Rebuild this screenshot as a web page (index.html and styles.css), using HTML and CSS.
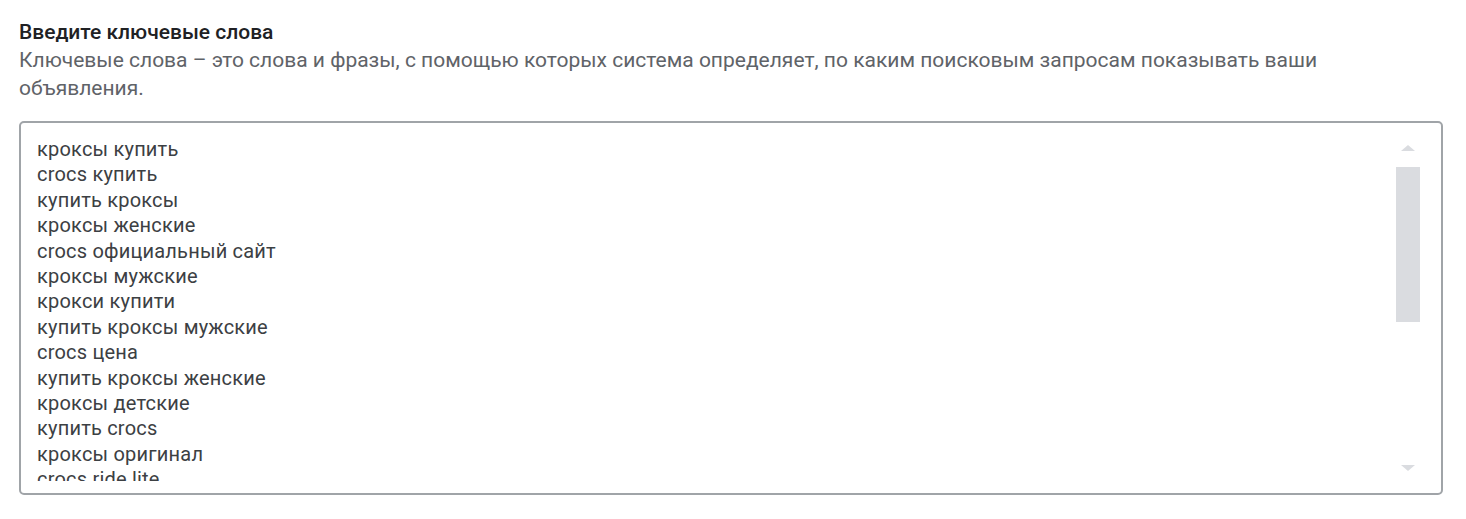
FILE: index.html
```html
<!DOCTYPE html>
<html lang="ru">
<head>
<meta charset="utf-8">
<link rel="stylesheet" href="styles.css">
</head>
<body>
<div class="page">
  <div class="title">Введите ключевые слова</div>
  <div class="desc">Ключевые слова – это слова и фразы, с помощью которых система определяет, по каким поисковым запросам показывать ваши объявления.</div>
  <div class="box">
    <div class="list">
      <div>кроксы купить</div>
      <div>crocs купить</div>
      <div>купить кроксы</div>
      <div>кроксы женские</div>
      <div>crocs официальный сайт</div>
      <div>кроксы мужские</div>
      <div>крокси купити</div>
      <div>купить кроксы мужские</div>
      <div>crocs цена</div>
      <div>купить кроксы женские</div>
      <div>кроксы детские</div>
      <div>купить crocs</div>
      <div>кроксы оригинал</div>
      <div>crocs ride lite</div>
    </div>
    <div class="scroll">
      <div class="arrow up"></div>
      <div class="track"><div class="thumb"></div></div>
      <div class="arrow down"></div>
    </div>
  </div>
</div>
</body>
</html>
```
FILE: styles.css
```css
html, body {
  margin: 0;
  background: #ffffff;
}
.page {
  padding: 18px 23px 0 19px;
  font-family: Roboto, "Noto Sans", sans-serif;
}
.title {
  color: #202124;
  font-size: 21px;
  font-weight: 500;
  line-height: 28px;
}
.desc {
  color: #5f6368;
  font-size: 21px;
  line-height: 28px;
  max-width: 1340px;
}
.box {
  margin-top: 19px;
  height: 374px;
  box-sizing: border-box;
  border: 2px solid #a0a4a8;
  border-radius: 5px;
  display: flex;
}
.list {
  flex: 1;
  margin: 14px 0 12px 16px;
  overflow: hidden;
  color: #3c4043;
  font-size: 20px;
  letter-spacing: 0.2px;
  line-height: 25.4px;
}
.scroll {
  width: 24px;
  margin: 22px 21px 22px 0;
  display: flex;
  flex-direction: column;
  align-items: center;
}
.arrow {
  width: 0;
  height: 0;
  border-left: 7px solid transparent;
  border-right: 7px solid transparent;
}
.arrow.up {
  border-bottom: 6px solid #dadce0;
}
.arrow.down {
  border-top: 6px solid #dadce0;
}
.track {
  flex: 1;
  width: 24px;
  padding: 16px 0;
}
.thumb {
  width: 24px;
  height: 155px;
  background: #dadce0;
}
```
